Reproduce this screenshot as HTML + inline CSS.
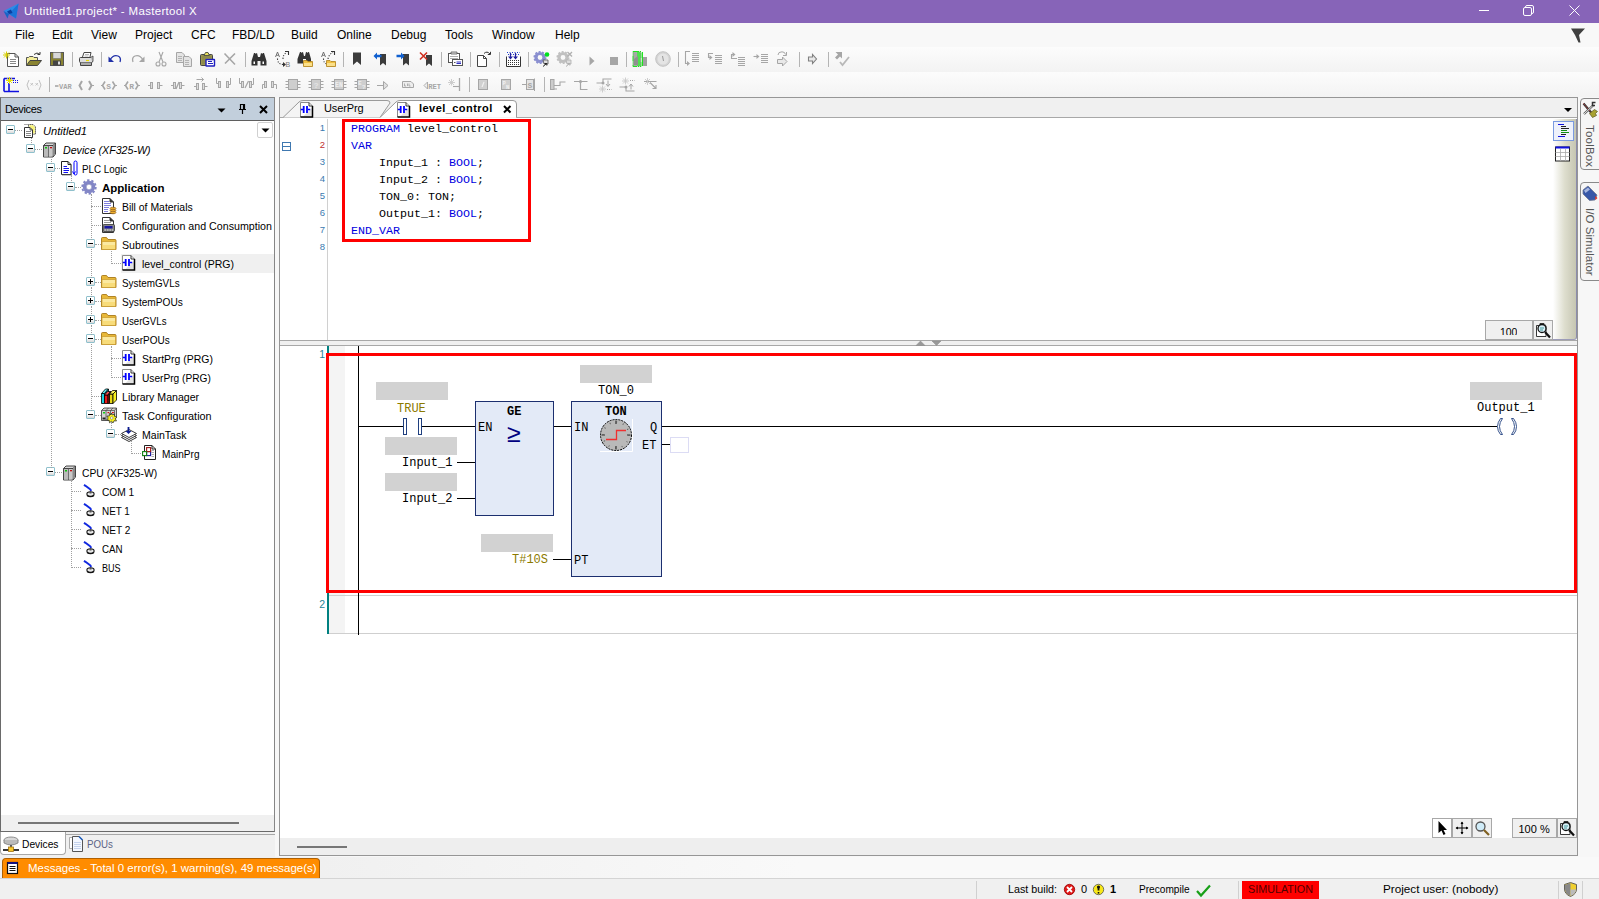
<!DOCTYPE html>
<html><head><meta charset="utf-8"><title>Mastertool X</title>
<style>

*{box-sizing:border-box;margin:0;padding:0}
html,body{width:1599px;height:899px;overflow:hidden;background:#f0f0f0;font-family:"Liberation Sans",sans-serif;font-size:11px;color:#000}
.abs{position:absolute}
#title{position:absolute;left:0;top:0;width:1599px;height:23px;background:#8764b8;color:#fff;font-size:11.5px}
#title .t{position:absolute;left:24px;top:5px;white-space:nowrap;letter-spacing:0.32px}
#menu{position:absolute;left:0;top:23px;width:1599px;height:24px;background:#f8f8f8;font-size:12px}
#menu span{position:absolute;top:5px;white-space:nowrap}
#tb1{position:absolute;left:0;top:47px;width:1599px;height:25px;background:linear-gradient(#fcfcfc,#f3f3f3)}
#tb2{position:absolute;left:0;top:72px;width:1599px;height:25px;background:linear-gradient(#fcfcfc,#f3f3f3)}
.sep{position:absolute;width:1px;height:15px;background:#b4b4b4;top:5px}
svg{position:absolute;overflow:visible}
/* left panel */
#lp{position:absolute;left:0;top:97px;width:275px;height:735px;background:#fff;border:1px solid #868686;border-left-color:#6a6a6a;border-bottom-color:#6a6a6a}
#lph{position:absolute;left:0;top:0;width:273px;height:23px;background:#c2cfdc;border-bottom:1px solid #5f5f5f;font-size:12px}
#lph .t{position:absolute;left:4px;top:5px;font-size:11px;letter-spacing:-0.35px}
.row{position:absolute;left:0;height:19px;width:273px;white-space:nowrap;font-size:11px;line-height:19px}
.row .tx{position:absolute;top:1px;transform-origin:0 50%;display:inline-block}
.pm{position:absolute;width:9px;height:9px;border:1px solid #8fc0cc;background:linear-gradient(#fff 45%,#d8d8d8);border-radius:1px}
.pm:before{content:"";position:absolute;left:1px;top:3px;width:5px;height:1px;background:#000}
.pm.plus:after{content:"";position:absolute;left:3px;top:1px;width:1px;height:5px;background:#000}
.dh{position:absolute;height:0;border-top:1px dotted #a0a0a0}
.dv{position:absolute;width:0;border-left:1px dotted #a0a0a0}
/* editor */
#ed{position:absolute;left:279px;top:97px;width:1300px;height:759px;border:1px solid #c8c8c8;background:#f0f0f0}
.code{position:absolute;font-family:"Liberation Mono",monospace;font-size:11.67px;white-space:pre;line-height:17px;color:#000}
.kw{color:#0000e0}
.ln{position:absolute;font-size:9.5px;color:#3b7ab0;text-align:right;width:20px}
.lad{position:absolute;font-family:"Liberation Mono",monospace;font-size:12px;white-space:pre;line-height:14px;color:#000}
.gph{position:absolute;background:#d2d2d2}

</style></head>
<body>
<div id="title"><svg style="left:3px;top:3px" width="17" height="17" viewBox="0 0 17 17"><path d="M0.5 8 L15.5 0.5 L13 15.5 L6 11 Z" fill="#2d8be8"/><path d="M0.5 8 L6 11 L4.5 15.5 Z" fill="#1565c8"/><path d="M6 11 L15.5 0.5 L13 15.5Z" fill="#1a73d8"/><path d="M4 8.5 L8 6.5 L9.5 10 L6 11Z" fill="#0a3fa0"/></svg>
<span class="t">Untitled1.project* - Mastertool X</span><svg style="left:1478px;top:5px" width="12" height="12" viewBox="0 0 12 12"><path d="M1 5.5H11" stroke="#fff" stroke-width="1" fill="none"/></svg>
<svg style="left:1523px;top:5px" width="12" height="12" viewBox="0 0 12 12"><rect x="0.5" y="2.5" width="8" height="8" rx="1.5" fill="none" stroke="#fff"/><path d="M2.5 2.5 V2 Q2.5 0.5 4 0.5 H9 Q10.5 0.5 10.5 2 V7 Q10.5 8.5 9 8.5 H8.5" fill="none" stroke="#fff"/></svg>
<svg style="left:1569px;top:5px" width="12" height="12" viewBox="0 0 12 12"><path d="M0.5 0.5 L10.5 10.5 M10.5 0.5 L0.5 10.5" stroke="#fff" stroke-width="1" fill="none"/></svg>
</div>
<div id="menu"><span style="left:15px">File</span><span style="left:52px">Edit</span><span style="left:91px">View</span><span style="left:135px">Project</span><span style="left:191px">CFC</span><span style="left:232px">FBD/LD</span><span style="left:291px">Build</span><span style="left:337px">Online</span><span style="left:391px">Debug</span><span style="left:445px">Tools</span><span style="left:492px">Window</span><span style="left:555px">Help</span><svg style="left:1570px;top:5px" width="16" height="16" viewBox="0 0 16 16"><path d="M1 0.5 H15 L9 7 L10.5 14.5 H8.5 L5 7 Z" fill="#404040"/></svg>
</div>
<div id="tb1"><svg style="left:3px;top:4px" width="16" height="16" viewBox="0 0 16 16"><path d="M4.5 2.5H12L15.5 6V15.5H4.5Z" fill="#fff" stroke="#555"/><path d="M12 2.5V6H15.5" fill="none" stroke="#555"/><path d="M7 8.5H13M7 10.5H13M7 12.5H13" stroke="#888"/><path d="M0 4H7M3.5 0.5V7.5M1 1.5L6 6.5M6 1.5L1 6.5" stroke="#d8d000" stroke-width="1"/></svg>
<svg style="left:26px;top:4px" width="16" height="16" viewBox="0 0 16 16"><path d="M0.5 14.5V6.5H2.5L3.5 5.5H7L8 6.5H11.5V9" fill="#f4ee9a" stroke="#555"/><path d="M0.5 14.5L4 9.5H15.5L11.5 14.5Z" fill="#8a8432" stroke="#444"/><path d="M8 3.5Q11 0.5 14 3.5M14 3.5V1M14 3.5H11.5" fill="none" stroke="#333"/></svg>
<svg style="left:49px;top:4px" width="16" height="16" viewBox="0 0 16 16"><rect x="1.5" y="1.5" width="13" height="13" fill="#8a8432" stroke="#555"/><rect x="4" y="1.5" width="8" height="6" fill="#d8d8d8" stroke="#666" stroke-width="0.5"/><rect x="4" y="9.5" width="8" height="5" fill="#444"/><rect x="9" y="10.5" width="2" height="3" fill="#ddd"/></svg>
<svg style="left:78px;top:4px" width="16" height="16" viewBox="0 0 16 16"><path d="M4.5 6 L6 1.5 H13 L12 6" fill="#fff" stroke="#444"/><path d="M7 3.5H11M6.5 5H10.5" stroke="#999" stroke-width="0.7"/><rect x="1.5" y="6.5" width="13" height="5" rx="1" fill="#ddd" stroke="#444"/><path d="M2.5 11.5 V14.5 H13.5 V11.5" fill="#aaa" stroke="#444"/><path d="M8 9.5H11" stroke="#e8d800" stroke-width="1.2"/><path d="M12.5 6.5 L15 5 V10 L14.5 11" fill="#bbb" stroke="#444" stroke-width="0.8"/></svg>
<svg style="left:107px;top:4px" width="16" height="16" viewBox="0 0 16 16"><path d="M3 9 Q6 3.5 11 5 Q14.5 6.5 13 11" fill="none" stroke="#2030a8" stroke-width="1.3"/><path d="M1.5 5.5 V11 H7 Z" fill="#2030a8"/></svg>
<svg style="left:130px;top:4px" width="16" height="16" viewBox="0 0 16 16"><path d="M13 9 Q10 3.5 5 5 Q1.5 6.5 3 11" fill="none" stroke="#a6a6a6" stroke-width="1.3"/><path d="M14.5 5.5 V11 H9 Z" fill="#a6a6a6"/></svg>
<svg style="left:153px;top:4px" width="16" height="16" viewBox="0 0 16 16"><path d="M6 1 L10 11 M10 1 L6 11" stroke="#a6a6a6" stroke-width="1.1" fill="none"/><circle cx="5" cy="13" r="2" fill="none" stroke="#a6a6a6" stroke-width="1.1"/><circle cx="11" cy="13" r="2" fill="none" stroke="#a6a6a6" stroke-width="1.1"/></svg>
<svg style="left:176px;top:4px" width="16" height="16" viewBox="0 0 16 16"><path d="M0.5 1.5H6L8.5 4V11.5H0.5Z" fill="#e4e4e4" stroke="#a6a6a6"/><path d="M7.500 5.5H13L15.5 8V15.5H7.5Z" fill="#e4e4e4" stroke="#a6a6a6"/><path d="M2 5.500H6M2 7.500H6M2 9.500H6M9 9.500H13M9 11.5H13M9 13.5H13" stroke="#a6a6a6" stroke-width="0.8"/></svg>
<svg style="left:199px;top:4px" width="16" height="16" viewBox="0 0 16 16"><rect x="1.5" y="3.5" width="12" height="11" rx="1" fill="#9a9650" stroke="#444"/><path d="M5 4.5 L6.5 1.500 H9 L10.5 4.5Z" fill="#e8e060" stroke="#554"/><path d="M3 6H12M3 8H7M3 10H7M3 12H7" stroke="#77733a" stroke-width="0.6"/><rect x="7" y="8.500" width="8.500" height="6.500" rx="0.5" fill="#fff" stroke="#2020c0" stroke-width="1.4"/><path d="M9 10.5H13M9 12.500H14" stroke="#2020c0" stroke-width="1.2"/></svg>
<svg style="left:222px;top:4px" width="16" height="16" viewBox="0 0 16 16"><path d="M2.500 2.5 L13 13.500 M13 2.5 L3 12.500" stroke="#a6a6a6" stroke-width="1.6" fill="none"/></svg>
<svg style="left:251px;top:4px" width="16" height="16" viewBox="0 0 16 16"><path d="M3 2 H6 L7 6 H9 L10 2 H13 L15.5 10 V14.500 H9.5 V10 H6.5 V14.5 H0.5 V10Z" fill="#333"/><rect x="2.500" y="10.500" width="1.500" height="2.500" fill="#fff"/><rect x="11.5" y="10.500" width="1.500" height="2.5" fill="#fff"/><rect x="4" y="1" width="1.500" height="1.5" fill="#fff"/><rect x="10.5" y="1" width="1.500" height="1.500" fill="#fff"/></svg>
<svg style="left:274px;top:4px" width="16" height="16" viewBox="0 0 16 16"><path d="M1.500 6 L3.500 1 L5.5 6 M2.300 4.300 H4.700" fill="none" stroke="#666" stroke-width="0.9"/><path d="M3.500 7.500 Q3.500 13.500 9.5 13.500" fill="none" stroke="#333" stroke-width="1.1" stroke-dasharray="1.2 1.500"/><path d="M9 11 L12 13.500 L9 16Z" fill="#333"/><path d="M9 8 Q9 3 13 1.500" fill="none" stroke="#333" stroke-width="1.100" stroke-dasharray="1.2 1.500"/><path d="M11 0.500 H14.500 V4" fill="none" stroke="#333" stroke-width="1.1"/><text x="11.500" y="15.500" font-family="Liberation Sans,sans-serif" font-size="7" fill="#777">B</text></svg>
<svg style="left:297px;top:4px" width="16" height="16" viewBox="0 0 16 16"><path d="M3 1 H6 L7 5 H8 L9 1 H12 L14 8 V12.500 H9 V8 H6 V12.5 H0.5 V8Z" fill="#333"/><rect x="4" y="0.300" width="1.300" height="1.300" fill="#fff"/><rect x="9.800" y="0.300" width="1.300" height="1.300" fill="#fff"/><path d="M6.500 15.500 V9.500 H10 L11 10.500 H15.500 V15.500Z" fill="#f0c040" stroke="#b08018" stroke-width="0.800"/><path d="M7 15 V12 H15 V15Z" fill="#fbe08a"/></svg>
<svg style="left:320px;top:4px" width="16" height="16" viewBox="0 0 16 16"><path d="M1.500 6 L3.500 1 L5.5 6 M2.300 4.300 H4.700" fill="none" stroke="#666" stroke-width="0.9"/><path d="M3.500 7.500 Q3.500 12.500 7 13" fill="none" stroke="#333" stroke-width="1.1" stroke-dasharray="1.2 1.500"/><path d="M8 8 Q9 3 13 1.500" fill="none" stroke="#333" stroke-width="1.100" stroke-dasharray="1.2 1.500"/><path d="M11 0.500 H14.500 V4" fill="none" stroke="#333" stroke-width="1.1"/><path d="M6.500 15.500 V9.500 H10 L11 10.500 H15.500 V15.500Z" fill="#f0c040" stroke="#b08018" stroke-width="0.800"/><path d="M7 15 V12 H15 V15Z" fill="#fbe08a"/></svg>
<svg style="left:349px;top:4px" width="16" height="16" viewBox="0 0 16 16"><path d="M4 1.500 H12 V14 L8 10.500 L4 14Z" fill="#3c3c3c"/></svg>
<svg style="left:372px;top:4px" width="16" height="16" viewBox="0 0 16 16"><path d="M8 3 H14 V14.500 L11 12 L8 14.500Z" fill="#3c3c3c"/><path d="M1.500 5 L5 1.500 V3.800 H9.500 V6.200 H5 V8.500Z" fill="#1060d0"/></svg>
<svg style="left:395px;top:4px" width="16" height="16" viewBox="0 0 16 16"><path d="M8 3 H14 V14.500 L11 12 L8 14.500Z" fill="#3c3c3c"/><path d="M9.500 5 L6 1.500 V3.800 H1.500 V6.200 H6 V8.500Z" fill="#1060d0"/></svg>
<svg style="left:418px;top:4px" width="16" height="16" viewBox="0 0 16 16"><path d="M8 4 H14 V15 L11 12.500 L8 15Z" fill="#3c3c3c"/><path d="M2 1.500 L9 8.500 M9 1.500 L2 8.500" stroke="#d03020" stroke-width="1.600" fill="none"/></svg>
<svg style="left:447px;top:4px" width="16" height="16" viewBox="0 0 16 16"><rect x="1.500" y="2.500" width="11" height="9" fill="#fff" stroke="#555"/><path d="M4 1 H10 V3 H4Z" fill="#ddd" stroke="#555" stroke-width="0.8"/><path d="M3 5.500H11M3 7.500H11" stroke="#999" stroke-width="0.800"/><rect x="5.500" y="8.500" width="10" height="6" fill="#fff" stroke="#555"/><path d="M7 11.500H8.500" stroke="#555" stroke-width="1.200"/><path d="M9.500 11H14M9.500 12.500H14" stroke="#3030c0" stroke-width="1"/></svg>
<svg style="left:476px;top:4px" width="16" height="16" viewBox="0 0 16 16"><path d="M1.500 4.500 H7.500 L10.500 7.500 V15.500 H1.500Z" fill="#fff" stroke="#444"/><path d="M7.500 4.500V7.500H10.500" fill="none" stroke="#444"/><path d="M8 2.500 Q11 -0.500 14 3 M14.500 0.800 V3.500 H11.800" fill="none" stroke="#333" stroke-width="1"/></svg>
<svg style="left:505px;top:4px" width="16" height="16" viewBox="0 0 16 16"><path d="M1.500 5.500 V15.500 H15.500 V5.500" fill="#fff" stroke="#333"/><path d="M3 9.500H14M3 11.500H14M3 13.500H14" stroke="#333" stroke-width="1" stroke-dasharray="1 1"/><path d="M2 1.500H15M3 3.500H14" stroke="#2040d0" stroke-width="1" stroke-dasharray="1 1.500"/><path d="M5.500 2V7M10.500 2V7" stroke="#2020a0" stroke-width="1.2"/><path d="M3 5.500 L5.500 8.500 L8 5.500Z M8 5.500 L10.500 8.500 L13 5.500Z" fill="#2020a0"/></svg>
<svg style="left:534px;top:4px" width="16" height="16" viewBox="0 0 16 16"><circle cx="6" cy="6.500" r="4" fill="none" stroke="#8a8fd0" stroke-width="3.200"/><circle cx="6" cy="6.500" r="5.800" fill="none" stroke="#8a8fd0" stroke-width="1.500" stroke-dasharray="2 1.600"/><circle cx="13" cy="3.500" r="2.300" fill="#00e020"/><path d="M9 9 H14 V13 H10Z" fill="#ddd" stroke="#555" stroke-width="0.8"/><path d="M9 15.500 L12.500 12.500 M10.500 12.500 H12.800 V14.500" stroke="#222" stroke-width="1" fill="none"/></svg>
<svg style="left:557px;top:4px" width="16" height="16" viewBox="0 0 16 16"><circle cx="6" cy="6.500" r="4" fill="none" stroke="#c0c0c0" stroke-width="3.200"/><circle cx="6" cy="6.500" r="5.800" fill="none" stroke="#c0c0c0" stroke-width="1.500" stroke-dasharray="2 1.600"/><path d="M10.500 1 L15 5.500 M15 1 L10.500 5.500" stroke="#b0b0b0" stroke-width="1.300"/><path d="M9 9 H14 V13 H10Z" fill="#ddd" stroke="#b0b0b0" stroke-width="0.8"/><path d="M9 15.500 L12.500 12.500 M10.500 12.500 H12.800 V14.500" stroke="#b0b0b0" stroke-width="1" fill="none"/></svg>
<svg style="left:584px;top:4px" width="16" height="16" viewBox="0 0 16 16"><path d="M5.500 5.500 L10.500 10 L5.500 14.500Z" fill="#a6a6a6"/></svg>
<svg style="left:605px;top:4px" width="16" height="16" viewBox="0 0 16 16"><rect x="5" y="6" width="8" height="8" fill="#a6a6a6"/></svg>
<svg style="left:632px;top:4px" width="16" height="16" viewBox="0 0 16 16"><rect x="1" y="0.500" width="8" height="15" fill="#a8a8a8" stroke="#20e020" stroke-width="1" stroke-dasharray="6 1 1 1"/><rect x="5" y="1" width="3" height="14" fill="#50e050"/><path d="M10.500 1 V15" stroke="#20e020" stroke-width="1"/><path d="M11 6 H15 V15 H11Z" fill="#a0a0a0"/><path d="M2 8 L6 5 V14 H2Z" fill="#909090"/></svg>
<svg style="left:655px;top:4px" width="16" height="16" viewBox="0 0 16 16"><circle cx="8" cy="8" r="7.300" fill="#d4d4d4" stroke="#c4c4c4" stroke-width="1"/><circle cx="8" cy="8" r="5.500" fill="#e4e4e4"/><path d="M7.500 5 L8.500 10" stroke="#999" stroke-width="1" fill="none"/></svg>
<svg style="left:684px;top:4px" width="16" height="16" viewBox="0 0 16 16"><path d="M8 2.500H15M8 4.500H15M8 6.500H15M8 8.500H15M8 10.500H15" stroke="#a6a6a6" stroke-width="1"/><path d="M6 0.500 H1.500 V12.500 H4" fill="none" stroke="#a6a6a6" stroke-width="1.100"/><path d="M3 10 L6 12.500 L3 15Z" fill="#a6a6a6"/></svg>
<svg style="left:707px;top:4px" width="16" height="16" viewBox="0 0 16 16"><path d="M8 4.500H15M8 6.500H15M8 8.500H15M8 10.500H15M8 12.500H15" stroke="#a6a6a6" stroke-width="1"/><path d="M6 2.500 H1.500 V6.500 H3" fill="none" stroke="#a6a6a6" stroke-width="1.100"/><path d="M2.500 4 L5.500 6.500 L2.500 9Z" fill="#a6a6a6"/></svg>
<svg style="left:730px;top:4px" width="16" height="16" viewBox="0 0 16 16"><path d="M8 6.500H15M8 8.500H15M8 10.500H15M8 12.500H15M8 14.500H15" stroke="#a6a6a6" stroke-width="1"/><path d="M7 7.500 H1.500 V3.500 H3" fill="none" stroke="#a6a6a6" stroke-width="1.100"/><path d="M2.500 1 L5.500 3.500 L2.500 6Z" fill="#a6a6a6"/></svg>
<svg style="left:753px;top:4px" width="16" height="16" viewBox="0 0 16 16"><g transform="translate(0,1)"><path d="M8 2.500H15M8 4.500H15M8 6.500H15M8 8.500H15M8 10.500H15" stroke="#a6a6a6" stroke-width="1"/><path d="M0.500 4.500 H5" fill="none" stroke="#a6a6a6" stroke-width="1.100"/><path d="M3.500 2 L6.500 4.500 L3.500 7Z" fill="#a6a6a6"/></g></svg>
<svg style="left:776px;top:4px" width="16" height="16" viewBox="0 0 16 16"><path d="M2 4 Q2 0.800 6 0.800 Q9 0.800 9.500 3.500 M10.500 1 V4.500 H7" fill="none" stroke="#a6a6a6" stroke-width="1"/><path d="M1.500 8.500 H6.500 V6 L11 10.500 L6.500 15 V12.500 H1.500Z" fill="#e8e8e8" stroke="#a6a6a6" stroke-width="1"/></svg>
<svg style="left:805px;top:4px" width="16" height="16" viewBox="0 0 16 16"><path d="M3.500 6 H7.500 V3.500 L11.500 8 L7.500 12.500 V10 H3.500Z" fill="#e8e8e8" stroke="#808080" stroke-width="1.100"/></svg>
<svg style="left:834px;top:4px" width="16" height="16" viewBox="0 0 16 16"><path d="M1.500 2 H8 V8.500 L6 6.500 L3 9.500 L1 7.500 L4 4.500Z" fill="#a6a6a6" transform="translate(0,-1)"/><path d="M6 11 L8.500 14 L15 6" fill="none" stroke="#b8b8b8" stroke-width="1.800"/></svg>
<div class="sep" style="left:72px"></div><div class="sep" style="left:101px"></div><div class="sep" style="left:245px"></div><div class="sep" style="left:343px"></div><div class="sep" style="left:441px"></div><div class="sep" style="left:470px"></div><div class="sep" style="left:499px"></div><div class="sep" style="left:528px"></div><div class="sep" style="left:626px"></div><div class="sep" style="left:678px"></div><div class="sep" style="left:799px"></div><div class="sep" style="left:828px"></div></div>
<div id="tb2"><svg style="left:3px;top:5px" width="16" height="16" viewBox="0 0 16 16"><path d="M1 1.500 V14.500 M1 1.500 H12 M1 14.500 H16" stroke="#1010e0" stroke-width="1.600" fill="none"/><path d="M6 6 V14" stroke="#1010e0" stroke-width="1.600"/><path d="M10 3.500H16M10 5.500H16" stroke="#1010e0" stroke-width="1" stroke-dasharray="1 1"/><path d="M3 3.500H10M6.500 0V7M4 1L9 6M9 1L4 6" stroke="#e8e000" stroke-width="1"/></svg>
<svg style="left:26px;top:5px" width="16" height="16" viewBox="0 0 16 16"><path d="M3 3 L1 8 L3 13 M13 3 L15 8 L13 13" fill="none" stroke="#c0c0c0" stroke-width="1"/><path d="M4.500 6 L7 8.500 M7 6 L4.500 8.500 M9.500 6 L12 8.500 M12 6 L9.500 8.500" stroke="#c0c0c0" stroke-width="0.900"/></svg>
<svg style="left:55px;top:5px" width="16" height="16" viewBox="0 0 16 16"><path d="M0 9H3.500" stroke="#a6a6a6" stroke-width="1.600"/><text x="4" y="11.5" font-family="Liberation Mono,monospace" font-size="7" font-weight="bold" fill="#a6a6a6">VAR</text></svg>
<svg style="left:78px;top:5px" width="16" height="16" viewBox="0 0 16 16"><path d="M4 4 L1.500 8.500 L4 13 M11 4 L13.500 8.500 L11 13" fill="none" stroke="#a6a6a6" stroke-width="2"/><path d="M13.500 8.500H16" stroke="#a6a6a6" stroke-width="1"/></svg>
<svg style="left:101px;top:5px" width="16" height="16" viewBox="0 0 16 16"><path d="M4 4.500 L1.500 8.500 L4 12.500 M11.500 4.500 L14 8.500 L11.500 12.500" fill="none" stroke="#a6a6a6" stroke-width="1.600"/><path d="M14 8.500H16M0 8.500H1.500" stroke="#a6a6a6" stroke-width="1"/><text x="5.2" y="11.5" font-family="Liberation Mono,monospace" font-size="8" font-weight="bold" fill="#a6a6a6">S</text></svg>
<svg style="left:124px;top:5px" width="16" height="16" viewBox="0 0 16 16"><path d="M4 4.500 L1.500 8.500 L4 12.500 M11.500 4.500 L14 8.500 L11.500 12.500" fill="none" stroke="#a6a6a6" stroke-width="1.600"/><path d="M14 8.500H16M0 8.500H1.500" stroke="#a6a6a6" stroke-width="1"/><text x="5.2" y="11.5" font-family="Liberation Mono,monospace" font-size="8" font-weight="bold" fill="#a6a6a6">R</text></svg>
<svg style="left:147px;top:5px" width="16" height="16" viewBox="0 0 16 16"><path d="M1 8.500H3.500M13 8.500H15.500" stroke="#a6a6a6" stroke-width="1"/><rect x="3.500" y="5.500" width="2" height="6" fill="#ddd" stroke="#a6a6a6" stroke-width="1"/><rect x="10.500" y="5.500" width="2" height="6" fill="#ddd" stroke="#a6a6a6" stroke-width="1"/></svg>
<svg style="left:170px;top:5px" width="16" height="16" viewBox="0 0 16 16"><path d="M1 8.500H3.500M12 8.500H14.500" stroke="#a6a6a6" stroke-width="1"/><rect x="3.500" y="5.500" width="2" height="6" fill="#ddd" stroke="#a6a6a6" stroke-width="1"/><rect x="9.500" y="5.500" width="2" height="6" fill="#ddd" stroke="#a6a6a6" stroke-width="1"/><path d="M6 12 L9 5" stroke="#a6a6a6" stroke-width="1.300"/></svg>
<svg style="left:193px;top:5px" width="16" height="16" viewBox="0 0 16 16"><path d="M1 9.500H3.500M12 9.500H14.500" stroke="#a6a6a6" stroke-width="1"/><rect x="3.500" y="6.500" width="2" height="6" fill="#ddd" stroke="#a6a6a6" stroke-width="1"/><rect x="9.500" y="6.500" width="2" height="6" fill="#ddd" stroke="#a6a6a6" stroke-width="1"/><path d="M3.500 2.500H10.500M8.500 0.500L10.500 2.500L8.500 4.500" fill="none" stroke="#a6a6a6" stroke-width="1"/></svg>
<svg style="left:216px;top:5px" width="16" height="16" viewBox="0 0 16 16"><path d="M0.500 1 V6.500 H2" stroke="#a6a6a6" stroke-width="1" fill="none"/><rect x="2.500" y="4.500" width="2" height="6" fill="#ddd" stroke="#a6a6a6" stroke-width="1"/><rect x="10.500" y="4.500" width="2" height="6" fill="#ddd" stroke="#a6a6a6" stroke-width="1"/><path d="M13 7.500H14.500V1" stroke="#a6a6a6" stroke-width="1" fill="none"/></svg>
<svg style="left:239px;top:5px" width="16" height="16" viewBox="0 0 16 16"><path d="M0.500 1 V6.500 H2" stroke="#a6a6a6" stroke-width="1" fill="none"/><rect x="2.500" y="4.500" width="2" height="6" fill="#ddd" stroke="#a6a6a6" stroke-width="1"/><rect x="10.500" y="4.500" width="2" height="6" fill="#ddd" stroke="#a6a6a6" stroke-width="1"/><path d="M13 7.500H14.500V1" stroke="#a6a6a6" stroke-width="1" fill="none"/><path d="M6 11 L9.500 4" stroke="#a6a6a6" stroke-width="1.300"/></svg>
<svg style="left:262px;top:5px" width="16" height="16" viewBox="0 0 16 16"><path d="M0.500 12 V7.500 H2.500" stroke="#a6a6a6" stroke-width="1" fill="none"/><rect x="2.500" y="4.500" width="2" height="6" fill="#ddd" stroke="#a6a6a6" stroke-width="1"/><rect x="9.500" y="4.500" width="2" height="6" fill="#ddd" stroke="#a6a6a6" stroke-width="1"/><path d="M12 7.500H14.500V12" stroke="#a6a6a6" stroke-width="1" fill="none"/></svg>
<svg style="left:285px;top:5px" width="16" height="16" viewBox="0 0 16 16"><path d="M0.500 4.500H3.500M0.500 7.500H3.500M0.500 10.500H3.500M12.500 4.500H15.500M12.500 7.500H15.500M12.500 10.500H15.500" stroke="#a6a6a6" stroke-width="1"/><rect x="3.500" y="2.500" width="9" height="10" fill="#cecece" stroke="#a6a6a6" stroke-width="1"/></svg>
<svg style="left:308px;top:5px" width="16" height="16" viewBox="0 0 16 16"><path d="M0.500 4.500H3.500M0.500 7.500H3.500M0.500 10.500H3.500M12.500 4.500H15.500M12.500 7.500H15.500M12.500 10.500H15.500" stroke="#a6a6a6" stroke-width="1"/><rect x="3.500" y="2.500" width="9" height="10" fill="#cecece" stroke="#a6a6a6" stroke-width="1"/><text x="5.7" y="10.5" font-family="Liberation Mono,monospace" font-size="8" font-weight="bold" fill="#e4e4e4">?</text></svg>
<svg style="left:331px;top:5px" width="16" height="16" viewBox="0 0 16 16"><path d="M0.500 4.500H3.500M0.500 7.500H3.500M0.500 10.500H3.500M12.500 4.500H15.500M12.500 7.500H15.500M12.500 10.500H15.500" stroke="#a6a6a6" stroke-width="1"/><rect x="3.500" y="2.500" width="9" height="10" fill="#cecece" stroke="#a6a6a6" stroke-width="1"/><text x="4" y="9.8" font-family="Liberation Mono,monospace" font-size="6.5" font-weight="bold" fill="#eee">EN</text></svg>
<svg style="left:354px;top:5px" width="16" height="16" viewBox="0 0 16 16"><path d="M0.500 4.500H3.500M0.500 7.500H3.500M0.500 10.500H3.500M12.500 4.500H15.500M12.500 7.500H15.500M12.500 10.500H15.500" stroke="#a6a6a6" stroke-width="1"/><rect x="3.500" y="2.500" width="9" height="10" fill="#cecece" stroke="#a6a6a6" stroke-width="1"/><text x="4" y="7.5" font-family="Liberation Mono,monospace" font-size="6" font-weight="bold" fill="#eee">E</text><text x="8" y="11.8" font-family="Liberation Mono,monospace" font-size="6" font-weight="bold" fill="#eee">?</text></svg>
<svg style="left:376px;top:5px" width="16" height="16" viewBox="0 0 16 16"><path d="M1 8.500H9" stroke="#a6a6a6" stroke-width="1"/><path d="M7.500 4.500 L12 8.500 L7.500 12.500Z" fill="#e0e0e0" stroke="#a6a6a6" stroke-width="1"/></svg>
<svg style="left:400px;top:5px" width="16" height="16" viewBox="0 0 16 16"><path d="M2.500 4.500 H11 L13.500 7 V10.500 H2.500Z" fill="#eee" stroke="#a6a6a6" stroke-width="1"/><path d="M4.500 6.500V9H6M7.500 6.500V9M9 6.500V9H10.500" stroke="#a6a6a6" stroke-width="0.900" fill="none"/></svg>
<svg style="left:423px;top:5px" width="16" height="16" viewBox="0 0 16 16"><path d="M4.500 5 L1 8.500 L4.500 12Z" fill="#eee" stroke="#a6a6a6" stroke-width="0.900"/><text x="5.2" y="11.5" font-family="Liberation Mono,monospace" font-size="7.2" font-weight="bold" fill="#a6a6a6">RET</text></svg>
<svg style="left:446px;top:5px" width="16" height="16" viewBox="0 0 16 16"><path d="M13.500 1 V14" stroke="#a6a6a6" stroke-width="1.300"/><path d="M7 9.500H13.500" stroke="#a6a6a6" stroke-width="1.100"/><path d="M2 5.500H9M5.500 2V8.500M3 3L8 8M8 3L3 8" stroke="#c8c8c8" stroke-width="0.900"/></svg>
<svg style="left:475px;top:5px" width="16" height="16" viewBox="0 0 16 16"><rect x="3.500" y="2.500" width="9" height="10" fill="#d0d0d0" stroke="#a6a6a6"/><path d="M7 10 L9 5" stroke="#f0f0f0" stroke-width="1.200"/></svg>
<svg style="left:498px;top:5px" width="16" height="16" viewBox="0 0 16 16"><rect x="3.500" y="2.500" width="9" height="10" fill="#d0d0d0" stroke="#a6a6a6"/><text x="4.5" y="8" font-family="Liberation Mono,monospace" font-size="5.5" font-weight="bold" fill="#f0f0f0">P</text><text x="8" y="11.5" font-family="Liberation Mono,monospace" font-size="5.5" font-weight="bold" fill="#f0f0f0">N</text></svg>
<svg style="left:521px;top:5px" width="16" height="16" viewBox="0 0 16 16"><path d="M1 7.500H5" stroke="#a6a6a6"/><rect x="5.500" y="2.500" width="7" height="10" fill="#e4e4e4" stroke="#a6a6a6"/><path d="M13.500 1.500V14" stroke="#a6a6a6" stroke-width="1"/><text x="6.5" y="10.8" font-family="Liberation Mono,monospace" font-size="8" font-weight="bold" fill="#a6a6a6">S</text></svg>
<svg style="left:550px;top:5px" width="16" height="16" viewBox="0 0 16 16"><rect x="0.500" y="2.500" width="3.500" height="10" fill="#ccc" stroke="#a6a6a6"/><path d="M4 8.500H10V5H15.500M4 12H7" stroke="#a6a6a6" stroke-width="1.100" fill="none"/></svg>
<svg style="left:573px;top:5px" width="16" height="16" viewBox="0 0 16 16"><path d="M1 4.500H14.500M7.500 4.500V12.500H14.500" stroke="#a6a6a6" stroke-width="1.200" fill="none"/><circle cx="7.500" cy="4.500" r="1.500" fill="#a6a6a6"/></svg>
<svg style="left:596px;top:5px" width="16" height="16" viewBox="0 0 16 16"><path d="M0.500 6H7M7 6V2H15.500" stroke="#a6a6a6" stroke-width="1.100" fill="none"/><circle cx="7" cy="6" r="1.500" fill="#a6a6a6"/><path d="M12 3.500V9M10 7L12 9.500L14 7" stroke="#a6a6a6" stroke-width="1" fill="none"/><path d="M3 12H10M6.500 8.500V15.500M4 9.500L9 14.500M9 9.500L4 14.500" stroke="#c8c8c8" stroke-width="0.900"/><path d="M11 12.500H15.500" stroke="#a6a6a6" stroke-dasharray="1 1"/></svg>
<svg style="left:619px;top:5px" width="16" height="16" viewBox="0 0 16 16"><path d="M0.500 10H7M7 10V14H15.500" stroke="#a6a6a6" stroke-width="1.100" fill="none"/><circle cx="7" cy="10" r="1.500" fill="#a6a6a6"/><path d="M12 7.500V12.500M10 9.500L12 7L14 9.500" stroke="#a6a6a6" stroke-width="1" fill="none"/><path d="M3 4H10M6.500 0.500V7.500M4 1.500L9 6.500M9 1.500L4 6.500" stroke="#c8c8c8" stroke-width="0.900"/><path d="M11 3.500H15.500" stroke="#a6a6a6" stroke-dasharray="1 1"/></svg>
<svg style="left:642px;top:5px" width="16" height="16" viewBox="0 0 16 16"><path d="M2 4.500H14.500" stroke="#a6a6a6" stroke-width="1"/><path d="M5.500 1V8M3 2L8 7M8 2L3 7" stroke="#c8c8c8" stroke-width="0.900"/><path d="M8 5.500L14 11.500M14 8V11.500H10.500" stroke="#a6a6a6" stroke-width="1.100" fill="none"/></svg>
<div class="sep" style="left:49px"></div><div class="sep" style="left:469px"></div><div class="sep" style="left:544px"></div></div>
<div id="lp"><div id="lph"><span class="t">Devices</span><svg style="left:216px;top:10px" width="9" height="5" viewBox="0 0 9 5"><path d="M0.500 0.500 H8.500 L4.500 4.500Z" fill="#000"/></svg>
<svg style="left:237px;top:6px" width="9" height="11" viewBox="0 0 9 11"><path d="M2.500 0.500 H6.500 V5.500 H2.500Z M1 5.500 H8 M4.500 5.500 V10" fill="none" stroke="#000" stroke-width="1.200"/><path d="M5.500 1V5" stroke="#000" stroke-width="1.200"/></svg>
<svg style="left:258px;top:7px" width="9" height="9" viewBox="0 0 9 9"><path d="M1 1 L8 8 M8 1 L1 8" stroke="#000" stroke-width="2" fill="none"/></svg>
</div>
<div class="row" style="top:23px"><div class="dh" style="left:14px;top:9px;width:7px"></div><div class="pm" style="left:5px;top:4px"></div><svg style="left:21px;top:2px" width="16" height="16" viewBox="0 0 16 16"><path d="M2.500 1.500 H6" stroke="#555" stroke-dasharray="1 1"/><path d="M6.500 1.500 H11 L13.500 4 V11 H6.500Z" fill="#f6f27a" stroke="#555" stroke-width="0.900"/><path d="M7 2 H11 L13 4 V10.500 H7Z" fill="none" stroke="#fff" stroke-width="0.800" stroke-dasharray="1 1"/><path d="M2.500 4.500 H8 L10.500 7 V14.500 H2.500Z" fill="#fff" stroke="#333"/><path d="M8 4.500V7H10.500" fill="none" stroke="#333" stroke-width="0.800"/><path d="M4 8.500H9M4 10.500H9M4 12.500H9" stroke="#777" stroke-width="0.900"/></svg>
<span class="tx" style="left:42px;font-style:italic;transform:scaleX(1.013)">Untitled1</span></div>
<div class="row" style="top:42px"><div class="dh" style="left:34px;top:9px;width:7px"></div><div class="pm" style="left:25px;top:4px"></div><svg style="left:41px;top:2px" width="16" height="16" viewBox="0 0 16 16"><path d="M1.500 3.500 L4 1 H13.500 V12 L11 15 H1.500Z" fill="#d8d8d8" stroke="#333" stroke-width="0.900"/><path d="M1.500 3.500 H11 V15 M11 3.500 L13.500 1" fill="none" stroke="#333" stroke-width="0.900"/><path d="M6.500 3.500V15" stroke="#555" stroke-width="0.800"/><path d="M2 4 H6 V14.500 H2Z" fill="#bbb"/><path d="M7 4 H10.500 V14.500 H7Z" fill="#c8c8c8"/><rect x="3" y="5" width="2" height="1.500" fill="#10c010"/><rect x="8" y="5" width="2" height="1.300" fill="#c01010"/><path d="M11.500 3.500 L13 2 V11.500 L11.500 13.500Z" fill="#888"/></svg>
<span class="tx" style="left:62px;font-style:italic;transform:scaleX(0.968)">Device (XF325-W)</span></div>
<div class="row" style="top:61px"><div class="dh" style="left:54px;top:9px;width:7px"></div><div class="pm" style="left:45px;top:4px"></div><svg style="left:61px;top:1px" width="16" height="16" viewBox="0 0 16 16"><g transform="translate(-1,0)"><path d="M0.500 1.500 H7 L10 4.500 V14.500 H0.500Z" fill="#fff" stroke="#222"/><path d="M7 1.500V4.500H10" fill="none" stroke="#222"/><path d="M10.500 5V15H1" fill="none" stroke="#777" stroke-width="0.800"/><path d="M2.500 6.500H6M2.500 8.500H8M2.500 10.500H8M2.500 12.500H7" stroke="#1010f0" stroke-width="1.100"/><rect x="13" y="1" width="3" height="14" rx="1.500" fill="none" stroke="#0000ff" stroke-width="1"/><path d="M11.500 11.500 L13 14 L14.500 11.500" fill="none" stroke="#0000ff" stroke-width="1"/></g></svg>
<span class="tx" style="left:81px;transform:scaleX(0.892)">PLC Logic</span></div>
<div class="row" style="top:80px"><div class="dh" style="left:74px;top:9px;width:6px"></div><div class="pm" style="left:65px;top:4px"></div><svg style="left:80px;top:1px" width="16" height="16" viewBox="0 0 16 16"><circle cx="8" cy="8" r="4.500" fill="none" stroke="#8286c6" stroke-width="3.400"/><circle cx="8" cy="8" r="6.800" fill="none" stroke="#8286c6" stroke-width="1.800" stroke-dasharray="2.400 1.870"/><circle cx="8" cy="8" r="2.800" fill="#fff" stroke="#6a6eb0" stroke-width="0.600"/></svg>
<span class="tx" style="left:101px;font-weight:bold;transform:scaleX(1.045)">Application</span></div>
<div class="row" style="top:99px"><div class="dh" style="left:90px;top:9px;width:10px"></div><svg style="left:100px;top:1px" width="16" height="16" viewBox="0 0 16 16"><path d="M1.500 0.500 H9 L12.500 4 V15.500 H1.500Z" fill="#fff" stroke="#333"/><path d="M9 0.500V4H12.500" fill="#333" stroke="#333"/><path d="M3 3.500H8M3 5.500H10M3 7.500H10M3 9.500H8M3 11.500H7M3 13.500H7" stroke="#8080e0" stroke-width="1"/><ellipse cx="12" cy="10.500" rx="3" ry="1.300" fill="#f0b030" stroke="#805010" stroke-width="0.600"/><ellipse cx="12" cy="12.500" rx="3" ry="1.300" fill="#f0b030" stroke="#805010" stroke-width="0.600"/><ellipse cx="12" cy="14.500" rx="3" ry="1.300" fill="#f0b030" stroke="#805010" stroke-width="0.600"/></svg>
<span class="tx" style="left:121px;transform:scaleX(0.948)">Bill of Materials</span></div>
<div class="row" style="top:118px"><div class="dh" style="left:90px;top:9px;width:10px"></div><svg style="left:100px;top:1px" width="16" height="16" viewBox="0 0 16 16"><path d="M1.500 0.500 H9 L12.500 4 V15.500 H1.500Z" fill="#fff" stroke="#333"/><path d="M9 0.500V4H12.500" fill="#333" stroke="#333"/><path d="M3 3.500H8M3 5.500H10" stroke="#999" stroke-width="1"/><rect x="2" y="7.500" width="11.500" height="7" rx="1" fill="#888" stroke="#333" stroke-width="0.800"/><rect x="3.500" y="9" width="8" height="2.500" fill="#1818a0"/><path d="M3.500 13H12" stroke="#ddd" stroke-width="1" stroke-dasharray="1.500 1"/></svg>
<span class="tx" style="left:121px;transform:scaleX(0.969)">Configuration and Consumption</span></div>
<div class="row" style="top:137px"><div class="dh" style="left:94px;top:9px;width:6px"></div><div class="pm" style="left:85px;top:4px"></div><svg style="left:100px;top:1px" width="16" height="16" viewBox="0 0 16 16"><path d="M0.500 13.500 V2.500 Q0.500 1.500 1.500 1.500 H5.500 L7 3.500 H14 Q15 3.500 15 4.500 V13.500Z" fill="#e8b838" stroke="#a87818" stroke-width="0.900"/><path d="M1 13.500 V5.500 H14.500 V13.500Z" fill="#fbe9a0" stroke="#c89828" stroke-width="0.700"/><path d="M1.500 13 V9 H14 V13Z" fill="#f6d56a" opacity="0.700"/></svg>
<span class="tx" style="left:121px;transform:scaleX(0.967)">Subroutines</span></div>
<div class="row" style="top:156px"><div class="abs" style="left:120px;top:0;width:153px;height:19px;background:#f0f0f0"></div><div class="dh" style="left:110px;top:9px;width:10px"></div><svg style="left:121px;top:1px" width="16" height="16" viewBox="0 0 16 16"><path d="M0.500 0.500 H9 L12.500 4 V15 H0.500Z" fill="#fff"/><path d="M12 6 V14.500 H3Z" fill="#e2e2e2"/><path d="M0.500 15 V0.500 H9 L12.500 4" fill="none" stroke="#8a8a8a"/><path d="M9 0.500 V4 H12.500" fill="none" stroke="#222" stroke-width="0.900"/><path d="M12.500 4 V15 H0.500" fill="none" stroke="#000" stroke-width="1.500"/><path d="M0.800 7.500H3M7.800 7.500H10.200" stroke="#0000ff" stroke-width="1.400"/><path d="M3.700 4V11M7 4V11" stroke="#0000ff" stroke-width="1.800"/></svg>
<span class="tx" style="left:141px;transform:scaleX(0.959)">level_control (PRG)</span></div>
<div class="row" style="top:175px"><div class="dh" style="left:94px;top:9px;width:6px"></div><div class="pm plus" style="left:85px;top:4px"></div><svg style="left:100px;top:1px" width="16" height="16" viewBox="0 0 16 16"><path d="M0.500 13.500 V2.500 Q0.500 1.500 1.500 1.500 H5.500 L7 3.500 H14 Q15 3.500 15 4.500 V13.500Z" fill="#e8b838" stroke="#a87818" stroke-width="0.900"/><path d="M1 13.500 V5.500 H14.500 V13.500Z" fill="#fbe9a0" stroke="#c89828" stroke-width="0.700"/><path d="M1.500 13 V9 H14 V13Z" fill="#f6d56a" opacity="0.700"/></svg>
<span class="tx" style="left:121px;transform:scaleX(0.897)">SystemGVLs</span></div>
<div class="row" style="top:194px"><div class="dh" style="left:94px;top:9px;width:6px"></div><div class="pm plus" style="left:85px;top:4px"></div><svg style="left:100px;top:1px" width="16" height="16" viewBox="0 0 16 16"><path d="M0.500 13.500 V2.500 Q0.500 1.500 1.500 1.500 H5.500 L7 3.500 H14 Q15 3.500 15 4.500 V13.500Z" fill="#e8b838" stroke="#a87818" stroke-width="0.900"/><path d="M1 13.500 V5.500 H14.500 V13.500Z" fill="#fbe9a0" stroke="#c89828" stroke-width="0.700"/><path d="M1.500 13 V9 H14 V13Z" fill="#f6d56a" opacity="0.700"/></svg>
<span class="tx" style="left:121px;transform:scaleX(0.922)">SystemPOUs</span></div>
<div class="row" style="top:213px"><div class="dh" style="left:94px;top:9px;width:6px"></div><div class="pm plus" style="left:85px;top:4px"></div><svg style="left:100px;top:1px" width="16" height="16" viewBox="0 0 16 16"><path d="M0.500 13.500 V2.500 Q0.500 1.500 1.500 1.500 H5.500 L7 3.500 H14 Q15 3.500 15 4.500 V13.500Z" fill="#e8b838" stroke="#a87818" stroke-width="0.900"/><path d="M1 13.500 V5.500 H14.500 V13.500Z" fill="#fbe9a0" stroke="#c89828" stroke-width="0.700"/><path d="M1.500 13 V9 H14 V13Z" fill="#f6d56a" opacity="0.700"/></svg>
<span class="tx" style="left:121px;transform:scaleX(0.877)">UserGVLs</span></div>
<div class="row" style="top:232px"><div class="dh" style="left:94px;top:9px;width:6px"></div><div class="pm" style="left:85px;top:4px"></div><svg style="left:100px;top:1px" width="16" height="16" viewBox="0 0 16 16"><path d="M0.500 13.500 V2.500 Q0.500 1.500 1.500 1.500 H5.500 L7 3.500 H14 Q15 3.500 15 4.500 V13.500Z" fill="#e8b838" stroke="#a87818" stroke-width="0.900"/><path d="M1 13.500 V5.500 H14.500 V13.500Z" fill="#fbe9a0" stroke="#c89828" stroke-width="0.700"/><path d="M1.500 13 V9 H14 V13Z" fill="#f6d56a" opacity="0.700"/></svg>
<span class="tx" style="left:121px;transform:scaleX(0.906)">UserPOUs</span></div>
<div class="row" style="top:251px"><div class="dh" style="left:110px;top:9px;width:10px"></div><svg style="left:121px;top:1px" width="16" height="16" viewBox="0 0 16 16"><path d="M0.500 0.500 H9 L12.500 4 V15 H0.500Z" fill="#fff"/><path d="M12 6 V14.500 H3Z" fill="#e2e2e2"/><path d="M0.500 15 V0.500 H9 L12.500 4" fill="none" stroke="#8a8a8a"/><path d="M9 0.500 V4 H12.500" fill="none" stroke="#222" stroke-width="0.900"/><path d="M12.500 4 V15 H0.500" fill="none" stroke="#000" stroke-width="1.500"/><path d="M0.800 7.500H3M7.800 7.500H10.200" stroke="#0000ff" stroke-width="1.400"/><path d="M3.700 4V11M7 4V11" stroke="#0000ff" stroke-width="1.800"/></svg>
<span class="tx" style="left:141px;transform:scaleX(0.951)">StartPrg (PRG)</span></div>
<div class="row" style="top:270px"><div class="dh" style="left:110px;top:9px;width:10px"></div><svg style="left:121px;top:1px" width="16" height="16" viewBox="0 0 16 16"><path d="M0.500 0.500 H9 L12.500 4 V15 H0.500Z" fill="#fff"/><path d="M12 6 V14.500 H3Z" fill="#e2e2e2"/><path d="M0.500 15 V0.500 H9 L12.500 4" fill="none" stroke="#8a8a8a"/><path d="M9 0.500 V4 H12.500" fill="none" stroke="#222" stroke-width="0.900"/><path d="M12.500 4 V15 H0.500" fill="none" stroke="#000" stroke-width="1.500"/><path d="M0.800 7.500H3M7.800 7.500H10.200" stroke="#0000ff" stroke-width="1.400"/><path d="M3.700 4V11M7 4V11" stroke="#0000ff" stroke-width="1.800"/></svg>
<span class="tx" style="left:141px;transform:scaleX(0.924)">UserPrg (PRG)</span></div>
<div class="row" style="top:289px"><div class="dh" style="left:90px;top:9px;width:10px"></div><svg style="left:100px;top:1px" width="16" height="16" viewBox="0 0 16 16"><path d="M0.500 5.500 L4.500 1 H7.500 L3.500 5.500Z" fill="#60f0f8" stroke="#000" stroke-width="0.800"/><path d="M0.500 5.500 H3.500 V15.500 H0.500Z" fill="#18d0e0" stroke="#000" stroke-width="0.800"/><path d="M3.500 5.500 L7.500 1 V4 L6 7 H3.500Z" fill="#10a0b0" stroke="#000" stroke-width="0.800"/><path d="M3.500 7 H7 V15.500 H3.500Z" fill="#e81818" stroke="#000" stroke-width="0.800"/><path d="M3.500 7 L6.500 3.500 H9.500 L7 7Z" fill="#ff5050" stroke="#000" stroke-width="0.800"/><path d="M7 7 L9.500 3.500 V6 L8.500 7.500 V15.500 H7Z" fill="#a01010" stroke="#000" stroke-width="0.800"/><path d="M8.500 6 H12 V15.500 H8.500Z" fill="#e8d818" stroke="#000" stroke-width="0.800"/><path d="M8.500 6 L11.500 2.500 H15.500 L12 6Z" fill="#fff860" stroke="#000" stroke-width="0.800"/><path d="M12 6 L15.500 2.500 V12 L12 15.500Z" fill="#f8f020" stroke="#000" stroke-width="0.800"/></svg>
<span class="tx" style="left:121px;transform:scaleX(0.963)">Library Manager</span></div>
<div class="row" style="top:308px"><div class="dh" style="left:94px;top:9px;width:6px"></div><div class="pm" style="left:85px;top:4px"></div><svg style="left:100px;top:1px" width="16" height="16" viewBox="0 0 16 16"><path d="M0.500 3.500 L3 1 H15.500 V10 L13.500 13.500 H0.500Z" fill="#d4d4d4" stroke="#333" stroke-width="0.800"/><path d="M0.500 3.500 H13.500 V13.500 M13.500 3.500 L15.500 1 M5 3.500V13.500 M9.500 3.500V13.500 M5 3.500 L7.500 1 M9.500 3.500 L12 1" fill="none" stroke="#444" stroke-width="0.700"/><rect x="2" y="5" width="2" height="1.500" fill="#10d010"/><rect x="6.500" y="5" width="1.800" height="1.200" fill="#d01010"/><rect x="11" y="5" width="1.800" height="1.200" fill="#d01010"/><rect x="1.500" y="10.500" width="3" height="2" fill="#222"/><path d="M10.500 6 L11.500 8 L13.500 7 L13.500 9.300 L15.800 10 L14.300 11.800 L15.500 14 L13 13.800 L12 16 L10.500 14.200 L8.500 15.800 L8.200 13.300 L5.800 13 L7.200 11 L5.800 9 L8.300 9 L8.500 6.500 L10 8Z" fill="#f8f020" stroke="#222" stroke-width="0.700"/><circle cx="10.700" cy="11" r="1.300" fill="#fff" stroke="#665" stroke-width="0.500"/></svg>
<span class="tx" style="left:121px;transform:scaleX(0.983)">Task Configuration</span></div>
<div class="row" style="top:327px"><div class="dh" style="left:114px;top:9px;width:6px"></div><div class="pm" style="left:105px;top:4px"></div><svg style="left:120px;top:2px" width="16" height="16" viewBox="0 0 16 16"><path d="M0.500 10.500 L8 6.500 L15.500 10.500 L8 14.500Z" fill="#fff" stroke="#222" stroke-width="0.900"/><path d="M0.500 8.500 L8 4.500 L15.500 8.500 L8 12.500Z" fill="#fff" stroke="#222" stroke-width="0.900"/><path d="M0.500 6.500 L8 2.500 L15.500 6.500 L8 10.500Z" fill="#fff" stroke="#222" stroke-width="0.900"/><path d="M7.500 0V4.500" stroke="#0a1a90" stroke-width="1.800"/><path d="M4.500 4 L7.500 7 L10.500 4Z" fill="#0a1a90"/></svg>
<span class="tx" style="left:141px;transform:scaleX(0.958)">MainTask</span></div>
<div class="row" style="top:346px"><div class="dh" style="left:130px;top:9px;width:10px"></div><svg style="left:140px;top:1px" width="16" height="16" viewBox="0 0 16 16"><path d="M3.500 0.500 H11 L14.500 4 V14.500 H3.500Z" fill="#fff" stroke="#222"/><path d="M11 0.500V4H14.500" fill="none" stroke="#222"/><path d="M10.500 5.500H13M10.500 7.500H13M10.500 9.500H13M10.500 11.500H13" stroke="#999" stroke-width="0.800"/><rect x="5.600" y="6.600" width="4" height="4" fill="#fff" stroke="#1818a0" stroke-width="1.100"/><rect x="5.600" y="2.600" width="4" height="4" fill="#fff" stroke="#a01818" stroke-width="1.100"/><rect x="1.600" y="6.600" width="4" height="4" fill="#fff" stroke="#108010" stroke-width="1.100"/></svg>
<span class="tx" style="left:161px;transform:scaleX(0.915)">MainPrg</span></div>
<div class="row" style="top:365px"><div class="dh" style="left:54px;top:9px;width:7px"></div><div class="pm" style="left:45px;top:4px"></div><svg style="left:61px;top:2px" width="16" height="16" viewBox="0 0 16 16"><path d="M1.500 3.500 L4 1 H13.500 V12 L11 15 H1.500Z" fill="#d8d8d8" stroke="#333" stroke-width="0.900"/><path d="M1.500 3.500 H11 V15 M11 3.500 L13.500 1" fill="none" stroke="#333" stroke-width="0.900"/><path d="M6.500 3.500V15" stroke="#555" stroke-width="0.800"/><path d="M2 4 H6 V14.500 H2Z" fill="#bbb"/><path d="M7 4 H10.500 V14.500 H7Z" fill="#c8c8c8"/><rect x="3" y="5" width="2" height="1.500" fill="#10c010"/><rect x="8" y="5" width="2" height="1.300" fill="#c01010"/><path d="M11.500 3.500 L13 2 V11.500 L11.500 13.500Z" fill="#888"/></svg>
<span class="tx" style="left:81px;transform:scaleX(0.938)">CPU (XF325-W)</span></div>
<div class="row" style="top:384px"><div class="dh" style="left:70px;top:9px;width:10px"></div><svg style="left:80px;top:2px" width="16" height="16" viewBox="0 0 16 16"><path d="M3 0.800 L5.500 2.500 L9.500 5.500 L10 7" fill="none" stroke="#1028e0" stroke-width="2"/><ellipse cx="9.500" cy="10" rx="3.600" ry="2.300" fill="#e8e8e8" stroke="#111" stroke-width="1.100"/><path d="M8.500 8H10.500V9.500H8.500Z" fill="#555"/><path d="M6 11.500 Q9.500 13.800 13 11.500" fill="none" stroke="#111" stroke-width="1.200"/></svg>
<span class="tx" style="left:101px;transform:scaleX(0.927)">COM 1</span></div>
<div class="row" style="top:403px"><div class="dh" style="left:70px;top:9px;width:10px"></div><svg style="left:80px;top:2px" width="16" height="16" viewBox="0 0 16 16"><path d="M3 0.800 L5.500 2.500 L9.500 5.500 L10 7" fill="none" stroke="#1028e0" stroke-width="2"/><ellipse cx="9.500" cy="10" rx="3.600" ry="2.300" fill="#e8e8e8" stroke="#111" stroke-width="1.100"/><path d="M8.500 8H10.500V9.500H8.500Z" fill="#555"/><path d="M6 11.500 Q9.500 13.800 13 11.500" fill="none" stroke="#111" stroke-width="1.200"/></svg>
<span class="tx" style="left:101px;transform:scaleX(0.897)">NET 1</span></div>
<div class="row" style="top:422px"><div class="dh" style="left:70px;top:9px;width:10px"></div><svg style="left:80px;top:2px" width="16" height="16" viewBox="0 0 16 16"><path d="M3 0.800 L5.500 2.500 L9.500 5.500 L10 7" fill="none" stroke="#1028e0" stroke-width="2"/><ellipse cx="9.500" cy="10" rx="3.600" ry="2.300" fill="#e8e8e8" stroke="#111" stroke-width="1.100"/><path d="M8.500 8H10.500V9.500H8.500Z" fill="#555"/><path d="M6 11.500 Q9.500 13.800 13 11.500" fill="none" stroke="#111" stroke-width="1.200"/></svg>
<span class="tx" style="left:101px;transform:scaleX(0.917)">NET 2</span></div>
<div class="row" style="top:441px"><div class="dh" style="left:70px;top:9px;width:10px"></div><svg style="left:80px;top:2px" width="16" height="16" viewBox="0 0 16 16"><path d="M3 0.800 L5.500 2.500 L9.500 5.500 L10 7" fill="none" stroke="#1028e0" stroke-width="2"/><ellipse cx="9.500" cy="10" rx="3.600" ry="2.300" fill="#e8e8e8" stroke="#111" stroke-width="1.100"/><path d="M8.500 8H10.500V9.500H8.500Z" fill="#555"/><path d="M6 11.500 Q9.500 13.800 13 11.500" fill="none" stroke="#111" stroke-width="1.200"/></svg>
<span class="tx" style="left:101px;transform:scaleX(0.887)">CAN</span></div>
<div class="row" style="top:460px"><div class="dh" style="left:70px;top:9px;width:10px"></div><svg style="left:80px;top:2px" width="16" height="16" viewBox="0 0 16 16"><path d="M3 0.800 L5.500 2.500 L9.500 5.500 L10 7" fill="none" stroke="#1028e0" stroke-width="2"/><ellipse cx="9.500" cy="10" rx="3.600" ry="2.300" fill="#e8e8e8" stroke="#111" stroke-width="1.100"/><path d="M8.500 8H10.500V9.500H8.500Z" fill="#555"/><path d="M6 11.500 Q9.500 13.800 13 11.500" fill="none" stroke="#111" stroke-width="1.200"/></svg>
<span class="tx" style="left:101px;transform:scaleX(0.822)">BUS</span></div>
<div class="dv" style="left:30px;top:40px;height:7px"></div><div class="dv" style="left:50px;top:58px;height:8px"></div><div class="dv" style="left:50px;top:75px;height:295px"></div><div class="dv" style="left:70px;top:77px;height:8px"></div><div class="dv" style="left:90px;top:96px;height:46px"></div><div class="dv" style="left:90px;top:151px;height:29px"></div><div class="dv" style="left:90px;top:189px;height:10px"></div><div class="dv" style="left:90px;top:208px;height:10px"></div><div class="dv" style="left:90px;top:227px;height:10px"></div><div class="dv" style="left:90px;top:246px;height:67px"></div><div class="dv" style="left:110px;top:153px;height:13px"></div><div class="dv" style="left:110px;top:248px;height:32px"></div><div class="dv" style="left:110px;top:324px;height:8px"></div><div class="dv" style="left:130px;top:343px;height:13px"></div><div class="dv" style="left:70px;top:381px;height:89px"></div><div class="abs" style="left:256px;top:24px;width:16px;height:16px;border:1px solid #d0d0d0;border-radius:2px;background:#fff"></div><svg style="left:260px;top:30px" width="9" height="5" viewBox="0 0 9 5"><path d="M0.500 0.500 H8.500 L4.500 4.500Z" fill="#000"/></svg>
<div class="abs" style="left:0;top:717px;width:273px;height:16px;background:#f0f0f0"></div><div class="abs" style="left:17px;top:724px;width:221px;height:2px;background:#767676"></div></div>
<div class="abs" style="left:65px;top:834px;width:210px;height:1px;background:#a8a8a8"></div><div class="abs" style="left:0px;top:832px;width:66px;height:23px;background:#fff;border:1px solid #a8a8a8;border-top:none;border-radius:0 0 4px 4px"></div><svg style="left:3px;top:836px" width="16" height="16" viewBox="0 0 16 16"><ellipse cx="8" cy="4" rx="7" ry="3" fill="#d8d8d8" stroke="#777" stroke-width="0.800"/><path d="M1 4 V7 Q8 11 15 7 V4" fill="#bbb" stroke="#777" stroke-width="0.800"/><path d="M8 9V12" stroke="#333" stroke-width="1.500"/><path d="M0 14H16" stroke="#222" stroke-width="1.800"/><rect x="5.500" y="11" width="5" height="4.500" fill="#f8c830" stroke="#a07010" stroke-width="0.800"/></svg>
<span class="abs" style="left:22px;top:838px;font-size:11px;transform:scaleX(0.933);transform-origin:0 50%">Devices</span><svg style="left:69px;top:836px" width="16" height="16" viewBox="0 0 16 16"><path d="M0.500 1.500 H6 V12.500 H0.500Z" fill="#fff" stroke="#999" stroke-width="0.800"/><path d="M3.500 0.500 H10 L13.500 4 V15.500 H3.500Z" fill="#f4f8ff" stroke="#555"/><path d="M10 0.500 L13.500 4" stroke="#2060c0" stroke-width="1.500"/><path d="M5 6.500H12M5 8.500H12M5 10.500H12M5 12.500H12" stroke="#b8c8e8" stroke-width="0.800"/></svg>
<span class="abs" style="left:87px;top:838px;font-size:11px;color:#5c6486;transform:scaleX(0.886);transform-origin:0 50%">POUs</span>
<div class="abs" style="left:275px;top:97px;width:1324px;height:760px;background:#f7f7f7"></div>
<div class="abs" style="left:279px;top:97px;width:1299px;height:759px;border:1px solid #969696;background:#f0f0f0"></div>
<div class="abs" style="left:280px;top:98px;width:1297px;height:19px;background:#f0f0f0"></div>
<div class="abs" style="left:280px;top:117px;width:1297px;height:1px;background:#a8a8a8"></div>
<svg style="left:280px;top:98px" width="260" height="21" viewBox="0 0 260 21"><path d="M3 19.500 L19 4 Q20.500 2.500 23 2.500 H107 Q110 2.500 110 5 L100 19.500" fill="#f4f4f4" stroke="#9a9a9a"/><path d="M100 19.500 L116 4 Q117.500 2.500 120 2.500 H233 Q236.500 2.500 236.500 6 V19.500" fill="#fff" stroke="#9a9a9a"/><path d="M100.500 20 H236" stroke="#fff" stroke-width="1.500"/></svg>
<svg style="left:300px;top:102px" width="16" height="16" viewBox="0 0 16 16"><path d="M0.500 0.500 H9 L12.500 4 V15 H0.500Z" fill="#fff"/><path d="M12 6 V14.500 H3Z" fill="#e2e2e2"/><path d="M0.500 15 V0.500 H9 L12.500 4" fill="none" stroke="#8a8a8a"/><path d="M9 0.500 V4 H12.500" fill="none" stroke="#222" stroke-width="0.900"/><path d="M12.500 4 V15 H0.500" fill="none" stroke="#000" stroke-width="1.500"/><path d="M0.800 7.500H3M7.800 7.500H10.200" stroke="#0000ff" stroke-width="1.400"/><path d="M3.700 4V11M7 4V11" stroke="#0000ff" stroke-width="1.800"/></svg>

<svg style="left:397px;top:102px" width="16" height="16" viewBox="0 0 16 16"><path d="M0.500 0.500 H9 L12.500 4 V15 H0.500Z" fill="#fff"/><path d="M12 6 V14.500 H3Z" fill="#e2e2e2"/><path d="M0.500 15 V0.500 H9 L12.500 4" fill="none" stroke="#8a8a8a"/><path d="M9 0.500 V4 H12.500" fill="none" stroke="#222" stroke-width="0.900"/><path d="M12.500 4 V15 H0.500" fill="none" stroke="#000" stroke-width="1.500"/><path d="M0.800 7.500H3M7.800 7.500H10.200" stroke="#0000ff" stroke-width="1.400"/><path d="M3.700 4V11M7 4V11" stroke="#0000ff" stroke-width="1.800"/></svg>

<span class="abs" style="left:324px;top:102px;font-size:11px;letter-spacing:-0.100px">UserPrg</span>
<span class="abs" style="left:419px;top:102px;font-size:11px;font-weight:bold;letter-spacing:0.450px">level_control</span>
<svg style="left:503px;top:105px" width="9" height="9" viewBox="0 0 9 9"><path d="M1 1 L7.500 7.500 M7.500 1 L1 7.500" stroke="#000" stroke-width="2" fill="none"/></svg>

<svg style="left:1564px;top:108px" width="8" height="4" viewBox="0 0 8 4"><path d="M0 0 H8 L4 4Z" fill="#000"/></svg>

<div class="abs" style="left:280px;top:118px;width:1297px;height:222px;background:#fff"></div>
<div class="abs" style="left:327px;top:119px;width:1px;height:221px;background:#d0d0d0"></div>
<div class="abs" style="left:1553px;top:119px;width:24px;height:221px;background:linear-gradient(90deg,#fff,#dedece 50%,#c6c6b2);border-right:1px solid #8c8cac;border-bottom:1px solid #9c9cb8;border-radius:0 0 3px 0"></div>
<div class="abs" style="left:1553px;top:121px;width:21px;height:20px;border:1px solid #7a9ae0;background:#eef1fb"></div>
<svg style="left:1556px;top:123px" width="16" height="16" viewBox="0 0 16 16"><path d="M2 1.500H8" stroke="#1010e0"/><path d="M5 3.500H10M5 5.500H13" stroke="#222"/><path d="M5 7.500H11M5 9.500H13" stroke="#109010"/><path d="M5 11.500H10" stroke="#222"/><path d="M2 13.500H9" stroke="#1010e0"/></svg>

<svg style="left:1555px;top:146px" width="15" height="16" viewBox="0 0 15 16"><rect x="0.500" y="1" width="14" height="14" fill="#fff" stroke="#222"/><path d="M0.500 1.500H14.500" stroke="#1010e0" stroke-width="2"/><path d="M0.500 6.500H14.500M0.500 10.500H14.500M5.500 3V15M10.500 3V15" stroke="#aaa" stroke-width="0.800"/></svg>

<div class="abs" style="left:1485px;top:320px;width:48px;height:20px;border:1px solid #a8a8a8;background:#f0f0f0"></div>
<span class="abs" style="left:1500px;top:326px;font-size:11px;height:9px;line-height:13px;overflow:hidden;transform:scaleX(0.95);transform-origin:0 50%">100</span>
<div class="abs" style="left:1533px;top:320px;width:20px;height:20px;border:1px solid #a8a8a8;background:#f0f0f0"></div>
<svg style="left:1535px;top:322px" width="16" height="16" viewBox="0 0 16 16"><path d="M1.500 3.500 H5 V1.500 H9 L11 4 V14.500 H1.500Z" fill="#fff" stroke="#222" stroke-width="0.900"/><circle cx="7" cy="6.500" r="4" fill="#d8f0f8" stroke="#111" stroke-width="1.300"/><path d="M5 6H9M5 8H8" stroke="#208080" stroke-width="0.800"/><path d="M10 10 L15 15.500" stroke="#111" stroke-width="2.200"/></svg>

<span class="ln" style="left:305px;top:122px;color:#3b7ab0">1</span>
<span class="ln" style="left:305px;top:139px;color:#c03030">2</span>
<span class="ln" style="left:305px;top:156px;color:#3b7ab0">3</span>
<span class="ln" style="left:305px;top:173px;color:#3b7ab0">4</span>
<span class="ln" style="left:305px;top:190px;color:#3b7ab0">5</span>
<span class="ln" style="left:305px;top:207px;color:#3b7ab0">6</span>
<span class="ln" style="left:305px;top:224px;color:#3b7ab0">7</span>
<span class="ln" style="left:305px;top:241px;color:#3b7ab0">8</span>
<svg style="left:282px;top:142px" width="9" height="9" viewBox="0 0 9 9"><rect x="0.500" y="0.500" width="8" height="8" fill="#fff" stroke="#3f78b0"/><path d="M0.500 4.500H8.500" stroke="#3f78b0"/></svg>

<span class="code" style="left:351px;top:121px"><span class="kw">PROGRAM</span> level_control</span>
<span class="code" style="left:351px;top:138px"><span class="kw">VAR</span></span>
<span class="code" style="left:379px;top:155px">Input_1 : <span class="kw">BOOL</span>;</span>
<span class="code" style="left:379px;top:172px">Input_2 : <span class="kw">BOOL</span>;</span>
<span class="code" style="left:379px;top:189px">TON_0: TON;</span>
<span class="code" style="left:379px;top:206px">Output_1: <span class="kw">BOOL</span>;</span>
<span class="code" style="left:351px;top:223px"><span class="kw">END_VAR</span></span>
<div class="abs" style="left:342px;top:119px;width:189px;height:123px;border:3px solid #ff0000"></div>
<div class="abs" style="left:280px;top:340px;width:1297px;height:1px;background:#a8a8a8"></div>
<div class="abs" style="left:280px;top:341px;width:1297px;height:4px;background:#f0f0f0"></div>
<div class="abs" style="left:280px;top:345px;width:1297px;height:1px;background:#a8a8a8"></div>
<svg style="left:916px;top:340px" width="9" height="6" viewBox="0 0 9 6"><path d="M0 5.500 L4.500 1 L9 5.500Z" fill="#999" stroke="#888" stroke-width="0.500"/></svg>

<svg style="left:932px;top:340px" width="9" height="6" viewBox="0 0 9 6"><path d="M0 1 L4.500 5.500 L9 1Z" fill="#999" stroke="#888" stroke-width="0.500"/></svg>

<div class="abs" style="left:280px;top:346px;width:1297px;height:492px;background:#fff"></div>
<div class="abs" style="left:327px;top:346px;width:2px;height:288px;background:#008080"></div>
<div class="abs" style="left:329px;top:346px;width:16px;height:288px;background:#f4f4f4"></div>
<div class="abs" style="left:329px;top:595px;width:1248px;height:1px;background:#cfcfcf"></div>
<div class="abs" style="left:329px;top:633px;width:1248px;height:1px;background:#cfcfcf"></div>
<div class="abs" style="left:358px;top:346px;width:1px;height:289px;background:#000"></div>
<span class="ln" style="left:305px;top:348px;color:#1f8497;font-size:10.5px">1</span>
<span class="ln" style="left:305px;top:598px;color:#1f8497;font-size:10.5px">2</span>
<div class="abs" style="left:376px;top:382px;width:72px;height:18px;background:#d2d2d2"></div>
<div class="abs" style="left:385px;top:437px;width:72px;height:18px;background:#d2d2d2"></div>
<div class="abs" style="left:385px;top:473px;width:72px;height:18px;background:#d2d2d2"></div>
<div class="abs" style="left:481px;top:534px;width:72px;height:18px;background:#d2d2d2"></div>
<div class="abs" style="left:580px;top:365px;width:72px;height:18px;background:#d2d2d2"></div>
<div class="abs" style="left:1470px;top:382px;width:72px;height:18px;background:#d2d2d2"></div>
<div class="abs" style="left:359px;top:426px;width:44px;height:1px;background:#000"></div>
<div class="abs" style="left:422px;top:426px;width:53px;height:1px;background:#000"></div>
<div class="abs" style="left:554px;top:426px;width:17px;height:1px;background:#000"></div>
<div class="abs" style="left:662px;top:426px;width:835px;height:1px;background:#000"></div>
<div class="abs" style="left:457px;top:462px;width:18px;height:1px;background:#000"></div>
<div class="abs" style="left:457px;top:498px;width:18px;height:1px;background:#000"></div>
<div class="abs" style="left:553px;top:559px;width:18px;height:1px;background:#000"></div>
<div class="abs" style="left:662px;top:444px;width:8px;height:1px;background:#000"></div>
<div class="abs" style="left:403px;top:418px;width:4px;height:17px;border:1px solid #1f3f7f;background:#fff"></div>
<div class="abs" style="left:418px;top:418px;width:4px;height:17px;border:1px solid #1f3f7f;background:#fff"></div>
<div class="abs" style="left:475px;top:401px;width:79px;height:115px;border:1px solid #1c2f6f;background:#e3eaf7"></div>
<div class="abs" style="left:571px;top:401px;width:91px;height:176px;border:1px solid #1c2f6f;background:#e3eaf7"></div>
<div class="abs" style="left:670px;top:437px;width:19px;height:16px;border:1px solid #dcdcf4;background:#fff"></div>
<span class="lad" style="left:397px;top:402px;color:#8c7a00">TRUE</span>
<span class="lad" style="left:402px;top:456px;">Input_1</span>
<span class="lad" style="left:402px;top:492px;">Input_2</span>
<span class="lad" style="left:512px;top:553px;color:#8c7a00">T#10S</span>
<span class="lad" style="left:598px;top:384px;">TON_0</span>
<span class="lad" style="left:507px;top:405px;font-weight:bold">GE</span>
<span class="lad" style="left:605px;top:405px;font-weight:bold">TON</span>
<span class="lad" style="left:478px;top:421px;">EN</span>
<span class="lad" style="left:574px;top:421px;">IN</span>
<span class="lad" style="left:650px;top:421px;">Q</span>
<span class="lad" style="left:642px;top:439px;">ET</span>
<span class="lad" style="left:574px;top:554px;">PT</span>
<span class="lad" style="left:1477px;top:401px;">Output_1</span>
<span class="abs" style="left:507px;top:419px;font-size:25px;line-height:28px;color:#000080;font-family:'Liberation Sans',sans-serif">&ge;</span>
<svg style="left:600px;top:419px" width="33" height="33" viewBox="0 0 33 33"><path d="M32.500 0V32.500H0" fill="none" stroke="#fff"/><circle cx="16" cy="16" r="15.500" fill="#b9b9b9" stroke="#000" stroke-width="1" stroke-dasharray="2 1"/><path d="M16 1.500V5M16 27V30.500M1.500 16H5M27 16H30.500" stroke="#333" stroke-width="1.200"/><circle cx="16" cy="16" r="13" fill="none" stroke="#555" stroke-width="1.500" stroke-dasharray="0.800 6"/><path d="M6 20.500H16.500V11.500H26" fill="none" stroke="#f03030" stroke-width="1.300"/></svg>
<svg style="left:1497px;top:418px" width="21" height="18" viewBox="0 0 21 18"><path d="M5.500 0.500 H3.500 Q0.500 4.500 0.500 8.500 Q0.500 13 3.500 16.500 H5.500 Q2.500 13 2.500 8.500 Q2.500 4.500 5.500 0.500Z M14.500 0.500 H16.500 Q19.500 4.500 19.500 8.500 Q19.500 13 16.500 16.500 H14.500 Q17.500 13 17.500 8.500 Q17.500 4.500 14.500 0.500Z" fill="#fff" stroke="#1f3f7f" stroke-width="0.900"/></svg>
<div class="abs" style="left:326px;top:353px;width:1251px;height:240px;border:3px solid #ff0000"></div>
<div class="abs" style="left:1432px;top:818px;width:20px;height:20px;border:1px solid #a8a8a8;background:#fff"></div>
<div class="abs" style="left:1452px;top:818px;width:20px;height:20px;border:1px solid #a8a8a8;background:#f0f0f0"></div>
<div class="abs" style="left:1472px;top:818px;width:20px;height:20px;border:1px solid #a8a8a8;background:#f0f0f0"></div>
<svg style="left:1434px;top:820px" width="16" height="16" viewBox="0 0 16 16"><path d="M4.500 1 V13 L7.500 10.500 L9.500 15 L11.500 14 L9.500 10 H13Z" fill="#000"/></svg>

<svg style="left:1454px;top:820px" width="16" height="16" viewBox="0 0 16 16"><path d="M8 2V14M2 8H14" stroke="#000" stroke-width="1"/><path d="M6.500 4L8 1.500L9.500 4Z M6.500 12L8 14.500L9.500 12Z M4 6.500L1.500 8L4 9.500Z M12 6.500L14.500 8L12 9.500Z" fill="#000"/></svg>

<svg style="left:1474px;top:820px" width="16" height="16" viewBox="0 0 16 16"><circle cx="6.500" cy="6.500" r="4.500" fill="#d0ecf8" stroke="#555" stroke-width="1.300"/><path d="M10 10 L15 15" stroke="#806020" stroke-width="2.200"/></svg>

<div class="abs" style="left:1512px;top:818px;width:45px;height:20px;border:1px solid #a8a8a8;background:#f0f0f0"></div>
<span class="abs" style="left:1518.500px;top:823px;font-size:11px">100 %</span>
<div class="abs" style="left:1557px;top:818px;width:20px;height:20px;border:1px solid #a8a8a8;background:#f0f0f0"></div>
<svg style="left:1559px;top:820px" width="16" height="16" viewBox="0 0 16 16"><path d="M1.500 3.500 H5 V1.500 H9 L11 4 V14.500 H1.500Z" fill="#fff" stroke="#222" stroke-width="0.900"/><circle cx="7" cy="6.500" r="4" fill="#d8f0f8" stroke="#111" stroke-width="1.300"/><path d="M5 6H9M5 8H8" stroke="#208080" stroke-width="0.800"/><path d="M10 10 L15 15.500" stroke="#111" stroke-width="2.200"/></svg>

<div class="abs" style="left:280px;top:838px;width:1297px;height:17px;background:#eeeeee"></div>
<div class="abs" style="left:297px;top:846px;width:50px;height:2px;background:#767676"></div>
<div class="abs" style="left:1580px;top:98px;width:22px;height:72px;border:1px solid #8a8a8a;border-radius:4px 0 0 4px;background:#f6f6f6"></div>
<div class="abs" style="left:1580px;top:182px;width:22px;height:99px;border:1px solid #8a8a8a;border-radius:4px 0 0 4px;background:#f6f6f6"></div>
<svg style="left:1582px;top:101px" width="16" height="16" viewBox="0 0 16 16"><path d="M1.500 2.500 L9.500 12" stroke="#333" stroke-width="2.200"/><path d="M1.500 2.500 L9.500 12" stroke="#e04848" stroke-width="0.900" stroke-dasharray="1.500 1.200"/><path d="M11 4.500 L2 13" stroke="#555" stroke-width="2.200"/><path d="M11 4.500 L2 13" stroke="#f4f4f4" stroke-width="0.900"/><path d="M13.500 1.500 H10.500 V4.500 H13" fill="none" stroke="#333" stroke-width="1.500"/><path d="M7.500 12.500 L12.500 8.500 L15.500 10.500 L13.500 12.500 L14.500 14.500 L10.500 16.500Z" fill="#a8a232" stroke="#5a5820" stroke-width="0.700"/></svg>

<svg style="left:1582px;top:185px" width="16" height="16" viewBox="0 0 16 16"><path d="M1 5 L6 1 L15 10 L13 15 L7.500 15.500 L1 9Z" fill="#3858a8" stroke="#707890" stroke-width="0.800"/><path d="M2 5.500 L6 2.500 L8 4.500 L3.500 8Z" fill="#a8b8e0"/><path d="M13 11 L15.500 13 L13.500 15Z" fill="#e03020"/></svg>

<span class="abs" style="left:1583px;top:125px;font-size:11.500px;color:#555;writing-mode:vertical-rl;letter-spacing:0.200px;line-height:14px;width:14px">ToolBox</span>
<span class="abs" style="left:1583px;top:208px;font-size:11.500px;color:#555;writing-mode:vertical-rl;letter-spacing:0.050px;line-height:14px;width:14px">I/O Simulator</span>
<div class="abs" style="left:0px;top:857px;width:1599px;height:21px;background:linear-gradient(90deg,#f0f0f0 320px,#f9f9f9 800px)"></div>
<div class="abs" style="left:2px;top:858px;width:318px;height:20px;background:#ff8c00;border-radius:4px 4px 0 0;border:1px solid #b06000;border-bottom:none"></div>
<div class="abs" style="left:0px;top:878px;width:1599px;height:1px;background:#d4d4d4"></div>
<svg style="left:7px;top:862px" width="11" height="12" viewBox="0 0 11 12"><rect x="0.500" y="0.500" width="10" height="11" fill="#fff" stroke="#111" stroke-width="1.200"/><path d="M0.500 1H10.500" stroke="#101080" stroke-width="2"/><path d="M2.500 4.500H8.500M2.500 6.500H8.500M2.500 8.500H8.500" stroke="#111" stroke-width="1"/></svg>

<span class="abs" style="left:27.500px;top:862px;font-size:11px;color:#fff;white-space:nowrap;transform:scaleX(1.043);transform-origin:0 50%">Messages - Total 0 error(s), 1 warning(s), 49 message(s)</span>
<div class="abs" style="left:0px;top:879px;width:1599px;height:20px;background:#f0f0f0"></div>
<div class="abs" style="left:976px;top:881px;width:1px;height:18px;background:#d0d0d0"></div>
<div class="abs" style="left:1238px;top:881px;width:1px;height:18px;background:#d0d0d0"></div>
<div class="abs" style="left:1558px;top:881px;width:1px;height:18px;background:#d0d0d0"></div>
<div class="abs" style="left:1582px;top:881px;width:1px;height:18px;background:#d0d0d0"></div>
<span class="abs" style="left:1008px;top:883px;font-size:11px;white-space:nowrap;transform:scaleX(0.977);transform-origin:0 50%;">Last build:</span>
<svg style="left:1063px;top:883px" width="13" height="13" viewBox="0 0 13 13"><circle cx="6.500" cy="6.500" r="5.200" fill="#e01818" stroke="#900" stroke-width="0.800"/><path d="M4 4L9 9M9 4L4 9" stroke="#fff" stroke-width="1.800"/></svg>

<span class="abs" style="left:1081px;top:883px;font-size:11px;white-space:nowrap;transform:scaleX(1);transform-origin:0 50%;">0</span>
<svg style="left:1092px;top:883px" width="13" height="13" viewBox="0 0 13 13"><circle cx="6.500" cy="6.500" r="5.200" fill="#f8e818" stroke="#665" stroke-width="0.900"/><path d="M6.500 3V7.500" stroke="#111" stroke-width="1.800"/><circle cx="6.500" cy="4" r="1.500" fill="#111"/><rect x="5.700" y="9" width="1.600" height="1.600" fill="#111"/></svg>

<span class="abs" style="left:1110px;top:883px;font-size:11px;white-space:nowrap;transform:scaleX(1);transform-origin:0 50%;font-weight:bold">1</span>
<span class="abs" style="left:1139px;top:883px;font-size:11px;white-space:nowrap;transform:scaleX(0.92);transform-origin:0 50%;">Precompile</span>
<svg style="left:1196px;top:884px" width="15" height="13" viewBox="0 0 15 13"><path d="M1 7 L5 11.500 L14 1.500" fill="none" stroke="#18a018" stroke-width="2.200"/></svg>

<div class="abs" style="left:1242px;top:881px;width:77px;height:18px;background:#ff0000"></div>
<span class="abs" style="left:1248px;top:883px;font-size:11px;white-space:nowrap;transform:scaleX(0.978);transform-origin:0 50%;color:#500000">SIMULATION</span>
<span class="abs" style="left:1383px;top:883px;font-size:11px;white-space:nowrap;transform:scaleX(1.066);transform-origin:0 50%;">Project user: (nobody)</span>
<svg style="left:1564px;top:882px" width="13" height="15" viewBox="0 0 13 15"><path d="M6.500 0.500 L12.500 2.500 V7 Q12.500 12 6.500 14.500 Q0.500 12 0.500 7 V2.500Z" fill="#f0d030" stroke="#555" stroke-width="0.900"/><path d="M6.500 1 V14 Q1 12 1 7 V3Z" fill="#888"/><path d="M6.500 7.500 H12 Q12 11.500 6.500 14Z" fill="#bbb"/></svg>


</body></html>
